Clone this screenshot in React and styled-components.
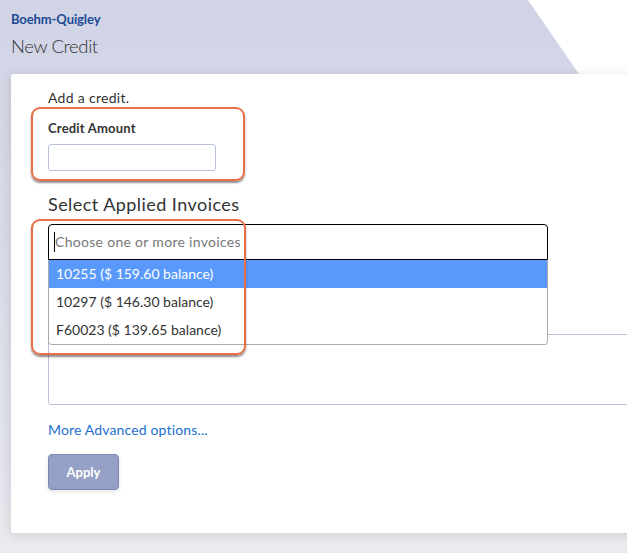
import React from "react";
import styled, { createGlobalStyle } from "styled-components";

const Global = createGlobalStyle`
  html, body { margin: 0; padding: 0; }
  body { font-family: Lato, "Open Sans", Arial, sans-serif; color: #333; }
  * { box-sizing: border-box; }
`;

const Page = styled.div`
  position: relative;
  min-height: 553px;
  overflow: hidden;
  background: linear-gradient(180deg, #d1d4e5 0%, #d9dbe8 45%, #e3e4ec 85%, #ebebf0 100%);
  &::before {
    content: "";
    position: absolute;
    top: 0;
    left: 0;
    width: 1000px;
    height: 700px;
    background: #ffffff;
    clip-path: polygon(528px 0, 1000px 0, 1000px 685px);
  }
`;

const Header = styled.header`
  position: relative;
  height: 74px;
  padding: 11px 11px 0;
`;

const Company = styled.div`
  font-size: 13px;
  line-height: 16px;
  font-weight: 700;
  letter-spacing: -0.1px;
  color: #1d4a96;
`;

const Title = styled.h1`
  margin: 7px 0 0;
  font-size: 18.5px;
  line-height: 24px;
  font-weight: 300;
  letter-spacing: -0.4px;
  color: #333;
`;

const Card = styled.main`
  position: relative;
  margin-left: 11px;
  width: 740px;
  background: #fff;
  border-radius: 3px;
  box-shadow: 0 2px 12px rgba(0, 0, 0, 0.12);
  padding: 14px 0 43px 37px;
  display: flex;
  flex-direction: column;
  align-items: flex-start;
`;

const Intro = styled.p`
  margin: 0;
  font-size: 14px;
  line-height: 20px;
  letter-spacing: 0.3px;
`;

const FieldGroup = styled.div`
  position: relative;
  margin-top: 11px;
  display: flex;
  flex-direction: column;
`;

const Label = styled.label`
  font-size: 13px;
  line-height: 18px;
  font-weight: 700;
  letter-spacing: 0.2px;
  color: #333;
`;

const TextInput = styled.div`
  margin-top: 7px;
  width: 168px;
  height: 27px;
  border: 1px solid #b7c0d8;
  border-radius: 3px;
  background: #fff;
`;

const Highlight = styled.div`
  position: absolute;
  z-index: 5;
  top: ${(p) => p.$top}px;
  left: ${(p) => p.$left}px;
  width: ${(p) => p.$w}px;
  height: ${(p) => p.$h}px;
  border: 2px solid #ea6f47;
  border-radius: 9px;
  box-shadow: 0 2px 2px rgba(0, 0, 0, 0.45);
  pointer-events: none;
`;

const SectionTitle = styled.h2`
  margin: 21px 0 0;
  font-size: 18px;
  line-height: 24px;
  font-weight: 400;
  letter-spacing: 0.45px;
  color: #333;
`;

const SelectWrap = styled.div`
  position: relative;
  margin-top: 8px;
  width: 500px;
`;

const SelectControl = styled.div`
  height: 36px;
  border: 1px solid #000;
  border-radius: 4px 4px 0 0;
  background: #fff;
  display: flex;
  align-items: center;
  padding-left: 5px;
`;

const Caret = styled.span`
  display: inline-block;
  width: 1px;
  height: 20px;
  background: #000;
`;

const Placeholder = styled.span`
  font-size: 14px;
  line-height: 34px;
  letter-spacing: 0.3px;
  color: #777;
`;

const Menu = styled.ul`
  position: absolute;
  z-index: 3;
  top: 100%;
  left: 0;
  right: 0;
  margin: 0;
  padding: 0;
  list-style: none;
  background: #fff;
  border: 1px solid #aaa;
  border-top: none;
  border-radius: 0 0 4px 4px;
  overflow: hidden;
`;

const MenuItem = styled.li`
  height: 28px;
  line-height: 28px;
  padding-left: 7px;
  font-size: 14px;
  color: ${(p) => (p.$active ? "#fff" : "#333")};
  background: ${(p) => (p.$active ? "#5999fb" : "#fff")};
`;

const TextArea = styled.div`
  margin-top: 74px;
  width: 640px;
  height: 71px;
  border: 1px solid #b8c1d6;
  border-radius: 3px;
  background: #fff;
`;

const Link = styled.a`
  margin-top: 15px;
  font-size: 14px;
  line-height: 20px;
  letter-spacing: 0.15px;
  color: #1b6fd0;
  text-decoration: none;
`;

const Button = styled.button`
  margin-top: 14px;
  width: 71px;
  height: 36px;
  border: 1px solid #7c88b6;
  border-radius: 4px;
  background: #94a0c5;
  color: #fff;
  font-family: inherit;
  font-size: 13px;
  font-weight: 700;
  box-shadow: 0 2px 4px rgba(0, 0, 0, 0.1);
  padding: 0;
`;

const invoices = [
  "10255 ($ 159.60 balance)",
  "10297 ($ 146.30 balance)",
  "F60023 ($ 139.65 balance)",
];

export default function App() {
  return (
    <>
      <Global />
      <Page>
        <Header>
          <Company>Boehm-Quigley</Company>
          <Title>New Credit</Title>
        </Header>
        <Card>
          <Intro>Add a credit.</Intro>
          <FieldGroup>
            <Label>Credit Amount</Label>
            <TextInput />
            <Highlight $top={-12} $left={-17} $w={214} $h={74} />
          </FieldGroup>
          <SectionTitle>Select Applied Invoices</SectionTitle>
          <SelectWrap>
            <SelectControl>
              <Caret />
              <Placeholder>Choose one or more invoices</Placeholder>
            </SelectControl>
            <Menu>
              {invoices.map((inv, i) => (
                <MenuItem key={inv} $active={i === 0}>
                  {inv}
                </MenuItem>
              ))}
            </Menu>
            <Highlight $top={-5} $left={-17} $w={215} $h={136} />
          </SelectWrap>
          <TextArea />
          <Link href="#">More Advanced options...</Link>
          <Button>Apply</Button>
        </Card>
      </Page>
    </>
  );
}
